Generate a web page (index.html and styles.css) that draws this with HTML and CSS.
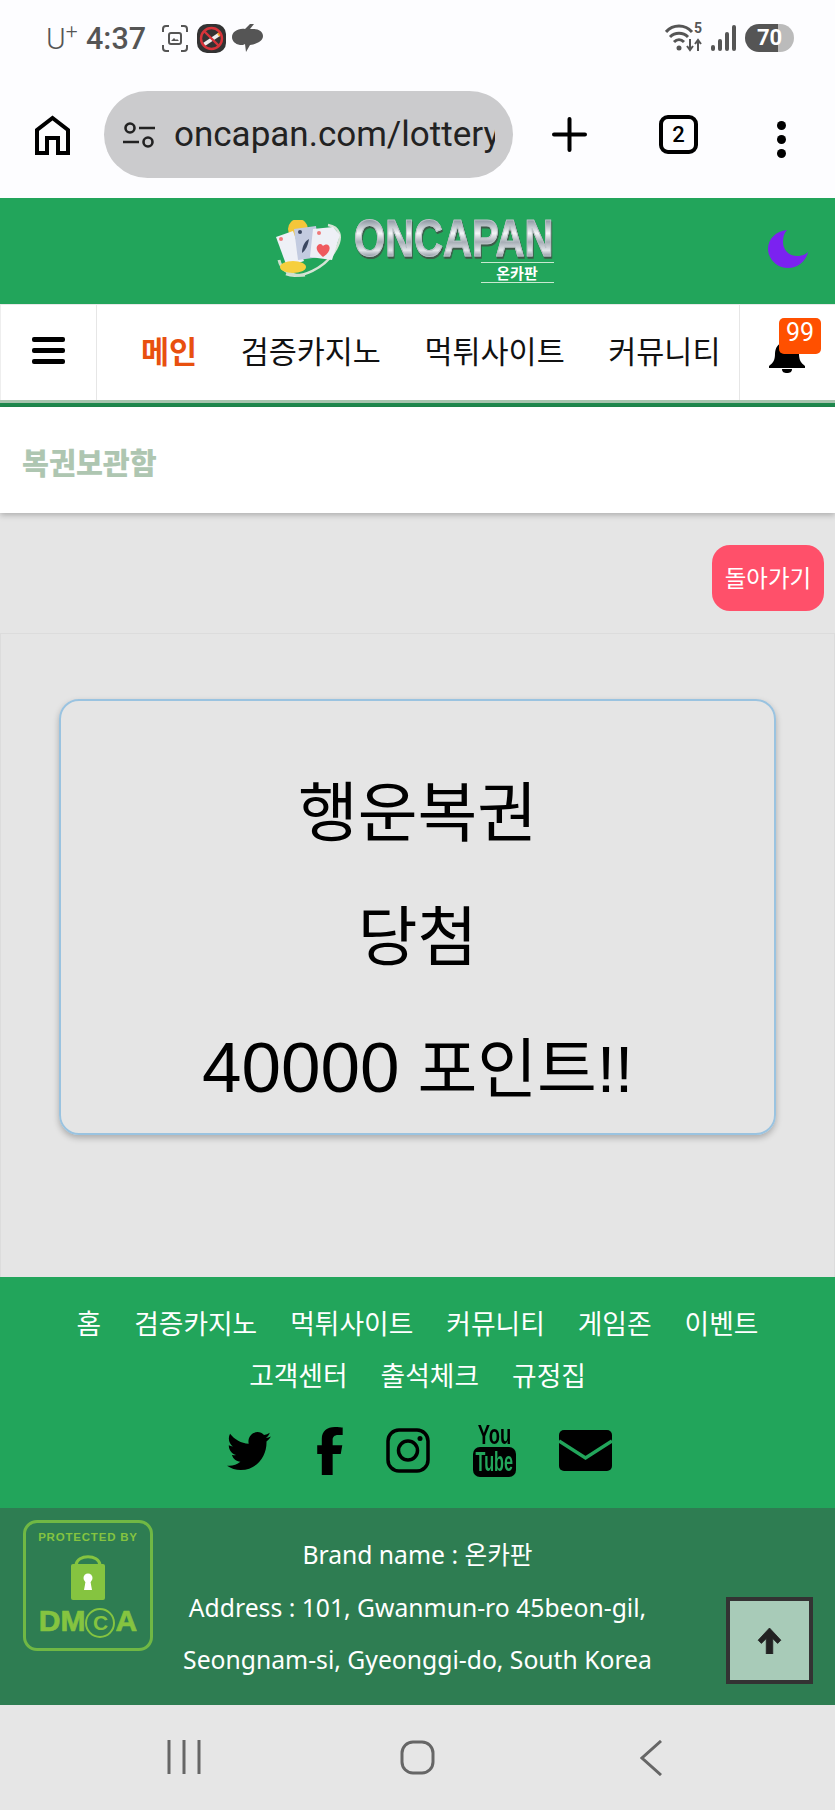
FILE: index.html
```html
<!DOCTYPE html>
<html lang="ko">
<head>
    <meta charset="UTF-8">
    <meta name="viewport" content="width=device-width, initial-scale=1.0">
    <title>복권보관함 - 온카판</title>
    <link rel="stylesheet" href="styles.css">
</head>
<body>
    <div class="phone">
        <!-- Status bar -->
        <div class="status">
            <div class="status-left">
                <span class="carrier">U<sup>+</sup></span>
                <span class="clock">4:37</span>
                <svg class="st-capture" viewBox="0 0 26 27" fill="none" stroke="#555" stroke-width="2">
                    <path d="M1 7V4a3 3 0 0 1 3-3h3M19 1h3a3 3 0 0 1 3 3v3M25 20v3a3 3 0 0 1-3 3h-3M7 26H4a3 3 0 0 1-3-3v-3"/>
                    <rect x="7" y="8" width="12" height="11" rx="2"/>
                    <path d="M9 16l3-3 2 2 1-1 2 2z" fill="#555" stroke="none"/>
                </svg>
                <svg class="st-smoke" viewBox="0 0 29 29">
                    <rect width="29" height="29" rx="10" fill="#333"/>
                    <path d="M6 19L21 9l2 3L8 22z" fill="#eee"/>
                    <path d="M20 9.600l3-2 2 3-3 2z" fill="#f0a030"/>
                    <circle cx="14.500" cy="14.500" r="10.500" fill="none" stroke="#d8343a" stroke-width="2.400"/>
                    <path d="M7 7l15 15" stroke="#d8343a" stroke-width="2.400"/>
                </svg>
                <svg class="st-blob" viewBox="0 0 31 28">
                    <path d="M18 0L13 5C6 4 0 8 0 13c0 4 3 7 8 8 2 0 4 0 5-1l1 8 4-7c7-1 13-4 13-9 0-4-4-7-9-7h-4l4-5z" fill="#555"/>
                </svg>
            </div>
            <div class="status-right">
                <svg class="st-wifi" viewBox="0 0 38 28" fill="none" stroke="#555" stroke-width="3">
                    <path d="M1 8c7-8 19-8 26 0M5 13c5-5 13-5 18 0M9 18c3-3 7-3 10 0"/>
                    <circle cx="14" cy="24" r="2.500" fill="#555" stroke="none"/>
                    <path d="M25 15v11M22 22l3 4 3-4M33 27V16M30 20l3-4 3 4" stroke-width="2"/>
                </svg>
                <span class="st-five">5</span>
                <div class="st-signal">
                    <i class="bar1"></i><i class="bar2"></i><i class="bar3"></i><i class="bar4"></i>
                </div>
                <div class="st-battery"><span>70</span></div>
            </div>
        </div>

        <!-- Browser bar -->
        <div class="browser">
            <svg class="br-home" viewBox="0 0 35 40" fill="none" stroke="#000" stroke-width="4">
                <path d="M2 38V15L17.500 3 33 15v23H23V23H12v15z"/>
            </svg>
            <div class="url">
                <svg class="url-icon" viewBox="0 0 32 26" fill="none" stroke="#222" stroke-width="2.600">
                    <circle cx="7" cy="6" r="4.500"/>
                    <path d="M16 6h16M0 20h16"/>
                    <circle cx="25" cy="20" r="4.500"/>
                </svg>
                <span class="url-text">oncapan.com/lottery</span>
            </div>
            <svg class="br-plus" viewBox="0 0 35 35" stroke="#000" stroke-width="4" stroke-linecap="round">
                <path d="M17.500 2v31M2 17.500h31"/>
            </svg>
            <div class="br-tabs">2</div>
            <div class="br-dots"><i></i><i></i><i></i></div>
        </div>

        <!-- Site header -->
        <header class="site-head">
            <a class="logo">
                <svg class="logo-mark" viewBox="0 0 66 60">
                    <circle cx="22" cy="9" r="10" fill="#f4c63a"/>
                    <path d="M52 5c12 2 15 12 8 24C50 48 24 60 10 54" fill="none" stroke="#d6e4d6" stroke-width="2.500"/>
                    <path d="M3 40c2 10 12 17 26 15" fill="none" stroke="#cfe0cf" stroke-width="3"/>
                    <path d="M0 17L17 11l11 30-17 6z" fill="#eef0f6"/>
                    <path d="M18 9l22-3 4 31-22 3z" fill="#c3cbe0"/>
                    <path d="M37 9l20-2 7 8-8 25-22-3z" fill="#eef0f6"/>
                    <ellipse cx="17" cy="47" rx="13" ry="6" fill="#f6cf3e"/>
                    <path d="M26 33c0-7 3-12 7-14-1 6-3 11-7 14z" fill="#3a4660"/>
                    <path d="M47 37c-6-5-8-9-5-12 2-2 4-1 5 1 2-2 5-2 6 0 2 3-1 8-6 11z" fill="#ef5a5f"/>
                    <circle cx="5" cy="19" r="2" fill="#ef7a7a"/>
                    <circle cx="24" cy="12" r="2" fill="#3a4660"/>
                    <circle cx="43" cy="13" r="2" fill="#ef7a7a"/>
                </svg>
                <div class="logo-words">
                    <span class="logo-name">ONCAPAN</span>
                    <span class="logo-sub">온카판</span>
                </div>
            </a>
            <svg class="moon" viewBox="0 0 40 38">
                <path d="M19 0C8 1 0 9 0 19s9 19 20 19c10 0 18-7 20-16-3 3-7 4-11 4-8 0-14-6-14-14 0-5 1-9 4-12z" fill="#7b22f0"/>
            </svg>
        </header>

        <!-- Menu -->
        <nav class="menu">
            <div class="menu-burger"><i></i><i></i><i></i></div>
            <ul class="menu-list">
                <li class="active">메인</li>
                <li>검증카지노</li>
                <li>먹튀사이트</li>
                <li>커뮤니티</li>
            </ul>
            <div class="menu-bell">
                <svg viewBox="0 0 36 36"><path d="M18 2c2 0 3 1 3 3 6 1 9 6 9 12 0 6 2 9 6 12v2H0v-2c4-3 6-6 6-12 0-6 3-11 9-12 0-2 1-3 3-3zM13 32h10c0 3-2 4-5 4s-5-1-5-4z" fill="#000"/></svg>
                <span class="badge">99</span>
            </div>
        </nav>
        <div class="menu-line"></div>

        <div class="page-title"><h2>복권보관함</h2></div>

        <main class="content">
            <div class="back-row"><a class="btn-back">돌아가기</a></div>
            <section class="lottery">
                <div class="ticket">
                    <p>행운복권</p>
                    <p>당첨</p>
                    <p><span class="num">40000</span> 포인트!!</p>
                </div>
            </section>
        </main>

        <!-- Footer -->
        <footer class="foot">
            <div class="foot-links">
                <a>홈</a><a>검증카지노</a><a>먹튀사이트</a><a>커뮤니티</a><a>게임존</a><a>이벤트</a>
                <a>고객센터</a><a>출석체크</a><a>규정집</a>
            </div>
            <div class="foot-social">
                <svg class="ic-tw" viewBox="0 48 512 416" preserveAspectRatio="none"><path d="M459.37 151.716c.325 4.548.325 9.097.325 13.645 0 138.72-105.583 298.558-298.558 298.558-59.452 0-114.68-17.219-161.137-47.106 8.447.974 16.568 1.299 25.34 1.299 49.055 0 94.213-16.568 130.274-44.832-46.132-.975-84.792-31.188-98.112-72.772 6.498.974 12.995 1.624 19.818 1.624 9.421 0 18.843-1.3 27.614-3.573-48.081-9.747-84.143-51.98-84.143-102.985v-1.299c13.969 7.797 30.214 12.67 47.431 13.319-28.264-18.843-46.781-51.005-46.781-87.391 0-19.492 5.197-37.36 14.294-52.954 51.655 63.675 129.3 105.258 216.365 109.807-1.624-7.797-2.599-15.918-2.599-24.04 0-57.828 46.782-104.934 104.934-104.934 30.213 0 57.502 12.67 76.67 33.137 23.715-4.548 46.456-13.32 66.599-25.34-7.798 24.366-24.366 44.833-46.132 57.827 21.117-2.273 41.584-8.122 60.426-16.243-14.292 20.791-32.161 39.308-52.628 54.253z"/></svg>
                <svg class="ic-fb" viewBox="60 0 240 512" preserveAspectRatio="none"><path d="M279.14 288l14.22-92.66h-88.91v-60.13c0-25.35 12.42-50.06 52.24-50.06h40.42V6.26S260.43 0 225.36 0c-73.22 0-121.08 44.38-121.08 124.72v70.62H62V288h42.28v224h100.17V288z"/></svg>
                <svg class="ic-ig" viewBox="0 0 44 45" fill="none" stroke="#000" stroke-width="3.500">
                    <rect x="2" y="2" width="40" height="41" rx="11"/>
                    <circle cx="22" cy="22.500" r="9.500"/>
                    <circle cx="34" cy="10.500" r="2.500" fill="#000" stroke="none"/>
                </svg>
                <div class="ic-yt">
                    <span class="yt-you">You</span>
                    <div class="yt-box"><span class="yt-tube">Tube</span></div>
                </div>
                <svg class="ic-mail" viewBox="0 0 53 41">
                    <rect width="53" height="41" rx="5"/>
                    <path d="M0 11l26.500 17L53 11" fill="none" stroke="#22a55b" stroke-width="3.500"/>
                </svg>
            </div>
        </footer>

        <div class="foot-info">
            <div class="dmca">
                <span class="dmca-top">PROTECTED BY</span>
                <svg class="dmca-lock" viewBox="0 0 34 48">
                    <path d="M5 13C6 2 28 2 29 13" fill="none" stroke="#85c440" stroke-width="3"/>
                    <rect y="12" width="34" height="36" rx="2" fill="#85c440"/>
                    <circle cx="17" cy="26" r="4.500" fill="#fff"/>
                    <path d="M15 27h4l2 11h-8z" fill="#fff"/>
                </svg>
                <span class="dmca-name">DM<b>C</b>A</span>
            </div>
            <div class="address">
                <p>Brand name : 온카판</p>
                <p>Address : 101, Gwanmun-ro 45beon-gil,</p>
                <p>Seongnam-si, Gyeonggi-do, South Korea</p>
            </div>
            <a class="to-top">
                <svg viewBox="0 0 28 32"><path d="M14 0L28 15l-4 4-6-6v19h-8V13l-6 6-4-4z" fill="#222" stroke="#222" stroke-linejoin="round" stroke-width="1"/></svg>
            </a>
        </div>

        <!-- Android nav -->
        <div class="softkeys">
            <svg class="key-recent" viewBox="0 0 34 34" stroke="#666" stroke-width="3"><path d="M2 0v34M17 0v34M32 0v34"/></svg>
            <svg class="key-home" viewBox="0 0 35 35" fill="none" stroke="#666" stroke-width="3"><rect x="2" y="2" width="31" height="31" rx="11"/></svg>
            <svg class="key-back" viewBox="0 0 23 36" fill="none" stroke="#666" stroke-width="3"><path d="M21 1L2 18l19 17"/></svg>
        </div>
    </div>
</body>
</html>
```

FILE: styles.css
```css
* {
    box-sizing: border-box;
}
body {
    margin: 0;
    background: #e5e5e5;
    font-family: "Noto Sans CJK KR", "Noto Sans", sans-serif;
}
p, h2, ul {
    margin: 0;
    padding: 0;
}
.phone {
    position: relative;
    width: 835px;
    height: 1810px;
    overflow: hidden;
    display: flex;
    flex-direction: column;
}

/* Status bar */
.status {
    height: 70px;
    padding: 6px 41px 0 46px;
    background: #fdfdff;
    display: flex;
    justify-content: space-between;
    align-items: center;
    color: #555;
    font-family: Roboto, sans-serif;
}
.status-left, .status-right {
    display: flex;
    align-items: center;
}
.carrier {
    font-size: 30px;
    width: 40px;
    font-weight: 300;
}
.carrier sup {
    font-size: 21px;
    line-height: 0;
}
.clock {
    font-size: 30.500px;
    font-weight: 500;
    width: 76px;
}
.st-capture {
    width: 26px;
    height: 27px;
}
.st-smoke {
    width: 29px;
    height: 29px;
    margin-left: 9px;
}
.st-blob {
    width: 31px;
    height: 28px;
    margin-left: 6px;
}
.status-right {
    position: relative;
}
.st-wifi {
    width: 38px;
    height: 28px;
}
.st-five {
    position: absolute;
    left: 29px;
    top: -4px;
    font-size: 14px;
    font-weight: 700;
}
.st-signal {
    display: flex;
    align-items: flex-end;
    gap: 3px;
    height: 26px;
    margin-left: 8px;
}
.st-signal i {
    display: block;
    width: 4px;
    background: #555;
    border-radius: 2px;
}
.bar1 { height: 6px; }
.bar2 { height: 12px; }
.bar3 { height: 19px; }
.bar4 { height: 26px; }
.st-battery {
    width: 49px;
    height: 28px;
    margin-left: 9px;
    border-radius: 14px;
    background: linear-gradient(90deg, #555 67%, #bbb 67%);
    color: #fff;
    font-size: 22px;
    font-weight: 700;
    text-align: center;
    line-height: 28px;
}

/* Browser bar */
.browser {
    height: 128px;
    padding-top: 21px;
    background: #fdfdff;
    display: flex;
    align-items: flex-start;
}
.br-home {
    width: 35px;
    height: 40px;
    margin: 24px 0 0 35px;
}
.url {
    width: 409px;
    height: 87px;
    flex: none;
    margin-left: 34px;
    padding: 0 18px 0 19px;
    border-radius: 44px;
    background: #cbcbcd;
    display: flex;
    align-items: center;
    gap: 19px;
}
.url-icon {
    width: 32px;
    height: 26px;
    flex: none;
}
.url-text {
    min-width: 0;
    font-family: Roboto, sans-serif;
    font-size: 35px;
    color: #222;
    white-space: nowrap;
    overflow: hidden;
}
.br-plus {
    width: 35px;
    height: 35px;
    margin: 26px 0 0 39px;
}
.br-tabs {
    width: 39px;
    height: 39px;
    margin: 24px 0 0 72px;
    border: 4px solid #000;
    border-radius: 9px;
    font: 500 22px/31px Roboto, sans-serif;
    text-align: center;
}
.br-dots {
    margin: 30px 0 0 79px;
    display: flex;
    flex-direction: column;
    gap: 5px;
}
.br-dots i {
    display: block;
    width: 9px;
    height: 9px;
    border-radius: 50%;
    background: #000;
}

/* Header */
.site-head {
    position: relative;
    height: 106px;
    background: #22a55b;
    display: flex;
    align-items: flex-start;
    justify-content: center;
}
.logo {
    display: flex;
    align-items: flex-start;
    gap: 12px;
    margin: 22px 0 0 -4px;
}
.logo-mark {
    width: 66px;
    height: 60px;
}
.logo-words {
    width: 202px;
    display: flex;
    flex-direction: column;
    align-items: flex-end;
}
.logo-name {
    display: block;
    flex: none;
    align-self: flex-start;
    width: 258px;
    height: 38px;
    font: 700 51px/38px "Liberation Sans", sans-serif;
    white-space: nowrap;
    transform: scaleX(0.785);
    transform-origin: left center;
    background: linear-gradient(180deg, #8d98a2 0%, #f4f6f8 35%, #a7aeb6 58%, #e2e6ea 80%, #7d8792 100%);
    -webkit-background-clip: text;
    background-clip: text;
    color: transparent;
    -webkit-text-stroke: 1px #b9c0c6;
    filter: drop-shadow(1px 2px 0 #3c5a48);
}
.logo-sub {
    width: 73px;
    margin: 4px 2px 0 0;
    border-top: 1px solid #c8e8d0;
    border-bottom: 1px solid #c8e8d0;
    color: #fff;
    font-size: 15px;
    font-weight: 700;
    line-height: 19px;
    text-align: center;
}
.moon {
    position: absolute;
    left: 768px;
    top: 32px;
    width: 40px;
    height: 38px;
}

/* Menu */
.menu {
    height: 96px;
    background: #fff;
    display: flex;
    align-items: stretch;
    border-top: 1px solid #e8e8e8;
}
.menu-burger {
    width: 97px;
    padding-bottom: 4px;
    border-left: 1px solid #eee;
    border-right: 1px solid #e6e6e6;
    display: flex;
    flex-direction: column;
    justify-content: center;
    align-items: center;
    gap: 6px;
}
.menu-burger i {
    display: block;
    width: 33px;
    height: 5px;
    border-radius: 2px;
    background: #000;
}
.menu-list {
    list-style: none;
    width: 642px;
    padding: 0 0 6px 44px;
    display: flex;
    align-items: center;
    gap: 43.500px;
    font-size: 30.500px;
    color: #111;
    white-space: nowrap;
    overflow: hidden;
}
.menu-list .active {
    font-weight: 700;
    color: #e8500f;
}
.menu-bell {
    position: relative;
    flex: 1;
    border-left: 1px solid #e6e6e6;
}
.menu-bell svg {
    position: absolute;
    left: 29px;
    top: 32px;
    width: 36px;
    height: 36px;
}
.badge {
    position: absolute;
    left: 39px;
    top: 13px;
    width: 42px;
    height: 36px;
    border-radius: 5px;
    background: #ff5000;
    color: #fff;
    font: 25px/30px Roboto, sans-serif;
    text-align: center;
}
.menu-line {
    height: 7px;
    background: #1e8a4e;
    border-top: 3px solid #a7c4ae;
}

.page-title {
    height: 106px;
    padding: 32px 22px 0;
    background: #fff;
    box-shadow: 0 2px 6px rgba(0, 0, 0, 0.25);
    position: relative;
}
.page-title h2 {
    font-size: 29.300px;
    line-height: 44px;
    font-weight: 900;
    color: #aec6b1;
}

/* Content */
.content {
    flex: none;
    height: 764px;
    background: #e5e5e5;
}
.back-row {
    height: 120px;
    padding: 32px 11px 0 0;
    display: flex;
    justify-content: flex-end;
}
.btn-back {
    width: 112px;
    height: 66px;
    border-radius: 18px;
    background: #ff506a;
    color: #fff;
    font-size: 23.500px;
    line-height: 64px;
    text-align: center;
    white-space: nowrap;
}
.lottery {
    height: 644px;
    padding: 65px 58px 0;
    border: 1px solid #dcdcdc;
    border-bottom: none;
}
.ticket {
    height: 436px;
    padding-top: 49px;
    border: 2px solid #9ac3e0;
    border-radius: 20px;
    box-shadow: 0 3px 6px rgba(0, 0, 0, 0.25);
    font-family: "Liberation Sans", "Noto Sans CJK KR", sans-serif;
    font-size: 65px;
    line-height: 127px;
    text-align: center;
    color: #000;
}
.ticket p {
    height: 124px;
}
.ticket p + p {
    height: 130px;
}
.ticket .num {
    font-size: 71px;
}

/* Footer */
.foot {
    height: 231px;
    background: #22a55b;
    padding-top: 20px;
}
.foot-links {
    display: flex;
    flex-wrap: wrap;
    justify-content: center;
    column-gap: 33px;
    padding: 0 60px;
    font-size: 26.750px;
    line-height: 52px;
    color: #fff;
}
.foot-social {
    margin-top: 23px;
    padding-left: 4px;
    display: flex;
    justify-content: center;
    align-items: center;
    gap: 43px;
}
.ic-tw {
    width: 44px;
    height: 38px;
}
.ic-fb {
    width: 26px;
    height: 48px;
    margin-left: 3px;
}
.ic-ig {
    width: 44px;
    height: 45px;
}
.ic-yt {
    width: 43px;
    height: 53px;
    display: flex;
    flex-direction: column;
    align-items: center;
    font-family: "Liberation Sans", sans-serif;
    font-weight: 700;
    color: #000;
}
.yt-you {
    height: 23px;
    font-size: 27px;
    line-height: 22px;
    transform: scaleX(0.68);
}
.yt-box {
    width: 43px;
    height: 30px;
    border-radius: 7px;
    background: #000;
    display: flex;
    justify-content: center;
}
.yt-tube {
    flex: none;
    color: #22a55b;
    font-size: 27px;
    line-height: 30px;
    white-space: nowrap;
    transform: scaleX(0.6);
}
.ic-mail {
    width: 53px;
    height: 41px;
}

.foot-info {
    position: relative;
    height: 197px;
    background: #2e7d52;
    display: flex;
}
.dmca {
    position: absolute;
    left: 23px;
    top: 12px;
    width: 130px;
    height: 131px;
    border: 3px solid #70b844;
    border-radius: 14px;
    display: flex;
    flex-direction: column;
    align-items: center;
    color: #85c440;
    font-family: "Liberation Sans", sans-serif;
    font-weight: 700;
}
.dmca-top {
    font-size: 11.500px;
    line-height: 12px;
    margin-top: 8px;
    letter-spacing: 0.8px;
    white-space: nowrap;
}
.dmca-lock {
    width: 34px;
    height: 48px;
    margin-top: 9px;
}
.dmca-name {
    font-size: 30px;
    line-height: 34px;
    margin-top: 4px;
    font-weight: 700;
    white-space: nowrap;
    -webkit-text-stroke: 0.7px #85c440;
}
.dmca-name b {
    display: inline-block;
    width: 30px;
    height: 30px;
    border: 2px solid #85c440;
    border-radius: 50%;
    font-size: 21px;
    line-height: 26px;
    text-align: center;
    vertical-align: 1px;
    -webkit-text-stroke: 0;
}
.address {
    width: 100%;
    padding-top: 21px;
    font-family: "Noto Sans", "Noto Sans CJK KR", sans-serif;
    font-size: 24.700px;
    line-height: 52.500px;
    color: #fff;
    text-align: center;
    white-space: nowrap;
}
.to-top {
    position: absolute;
    left: 726px;
    top: 89px;
    width: 87px;
    height: 87px;
    border: 4px solid #333;
    background: #a8cbb8;
    display: flex;
    align-items: center;
    justify-content: center;
}
.to-top svg {
    width: 27px;
    height: 26px;
}

/* Android keys */
.softkeys {
    position: relative;
    height: 105px;
    background: #e6e6e6;
}
.key-recent, .key-home, .key-back {
    position: absolute;
    top: 35px;
}
.key-recent {
    left: 167px;
    width: 34px;
    height: 34px;
}
.key-home {
    left: 400px;
    width: 35px;
    height: 35px;
}
.key-back {
    left: 640px;
    width: 23px;
    height: 36px;
}
```
